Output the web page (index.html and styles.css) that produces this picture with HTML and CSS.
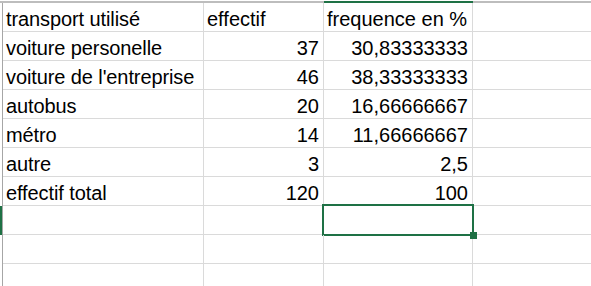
FILE: index.html
```html
<!DOCTYPE html>
<html lang="fr">
<head>
<meta charset="utf-8">
<title>Feuille</title>
<link rel="stylesheet" href="styles.css">
</head>
<body>
<div class="sheet">
  <div class="colhdr">
    <div class="ch ch-a"></div>
    <div class="ch ch-b"></div>
    <div class="ch ch-c sel"></div>
    <div class="ch ch-d"></div>
  </div>
  <div class="body">
    <div class="rowhdr">
      <div class="rh first"></div>
      <div class="rh"></div>
      <div class="rh"></div>
      <div class="rh"></div>
      <div class="rh"></div>
      <div class="rh"></div>
      <div class="rh"></div>
      <div class="rh sel"></div>
      <div class="rh"></div>
      <div class="rh"></div>
    </div>
    <div class="grid">
      <div class="row first">
        <div class="c a">transport utilisé</div>
        <div class="c b">effectif</div>
        <div class="c cc">frequence en %</div>
        <div class="c d"></div>
      </div>
      <div class="row">
        <div class="c a">voiture personelle</div>
        <div class="c b num">37</div>
        <div class="c cc num">30,83333333</div>
        <div class="c d"></div>
      </div>
      <div class="row">
        <div class="c a">voiture de l'entreprise</div>
        <div class="c b num">46</div>
        <div class="c cc num">38,33333333</div>
        <div class="c d"></div>
      </div>
      <div class="row">
        <div class="c a">autobus</div>
        <div class="c b num">20</div>
        <div class="c cc num">16,66666667</div>
        <div class="c d"></div>
      </div>
      <div class="row">
        <div class="c a">métro</div>
        <div class="c b num">14</div>
        <div class="c cc num">11,66666667</div>
        <div class="c d"></div>
      </div>
      <div class="row">
        <div class="c a">autre</div>
        <div class="c b num">3</div>
        <div class="c cc num">2,5</div>
        <div class="c d"></div>
      </div>
      <div class="row">
        <div class="c a">effectif total</div>
        <div class="c b num">120</div>
        <div class="c cc num">100</div>
        <div class="c d"></div>
      </div>
      <div class="row">
        <div class="c a"></div>
        <div class="c b"></div>
        <div class="c cc active"><span class="handle"></span></div>
        <div class="c d"></div>
      </div>
      <div class="row">
        <div class="c a"></div>
        <div class="c b"></div>
        <div class="c cc"></div>
        <div class="c d"></div>
      </div>
      <div class="row">
        <div class="c a"></div>
        <div class="c b"></div>
        <div class="c cc"></div>
        <div class="c d"></div>
      </div>
    </div>
  </div>
</div>
</body>
</html>
```

FILE: styles.css
```css
html, body {
  margin: 0;
  padding: 0;
  background: #ffffff;
  overflow: hidden;
}
body {
  width: 591px;
  height: 286px;
  font-family: "Liberation Sans", Arial, sans-serif;
  font-size: 20px;
  color: #000000;
}
.sheet {
  display: flex;
  flex-direction: column;
  width: 591px;
}
.colhdr {
  display: flex;
  height: 3px;
  box-sizing: border-box;
  padding-left: 3px;
  border-top: 1px solid #ffffff;
}
.ch {
  height: 2px;
  background: #bdbdbd;
}
.ch-a { width: 201px; margin-left: -3px; padding-left: 3px; }
.ch-b { width: 120px; }
.ch-c { width: 149px; }
.ch-d { flex: 1; }
.ch.sel { background: #1e7145; }
.body {
  display: flex;
}
.rowhdr {
  width: 3px;
  display: flex;
  flex-direction: column;
  flex: none;
}
.rh {
  width: 2px;
  height: 29px;
  border-right: 1px solid #a6a6a6;
}
.rh.sel {
  background: #1e7145;
}
.grid {
  display: flex;
  flex-direction: column;
  flex: 1;
}
.row {
  display: flex;
  height: 29px;
  box-sizing: border-box;
  border-bottom: 1px solid #dadada;
}
.c {
  display: flex;
  align-items: flex-end;
  box-sizing: border-box;
  border-right: 1px solid #dadada;
  padding: 0 3px 2px 3px;
  line-height: 20px;
  white-space: nowrap;
  overflow: visible;
  position: relative;
}
.c.a { width: 201px; }
.c.a:not(:empty) { letter-spacing: -0.1px; }
.c.b { width: 120px; }
.c.cc { width: 149px; }
.c.d { flex: 1; border-right: none; }
.c.num {
  justify-content: flex-end;
  padding-right: 4px;
}
.active::before {
  content: "";
  position: absolute;
  left: -2px;
  top: -2px;
  right: -2px;
  bottom: -2px;
  border: 2px solid #1e7145;
}
.handle {
  position: absolute;
  right: -5px;
  bottom: -5px;
  width: 7px;
  height: 7px;
  background: #1e7145;
  z-index: 1;
}
```
